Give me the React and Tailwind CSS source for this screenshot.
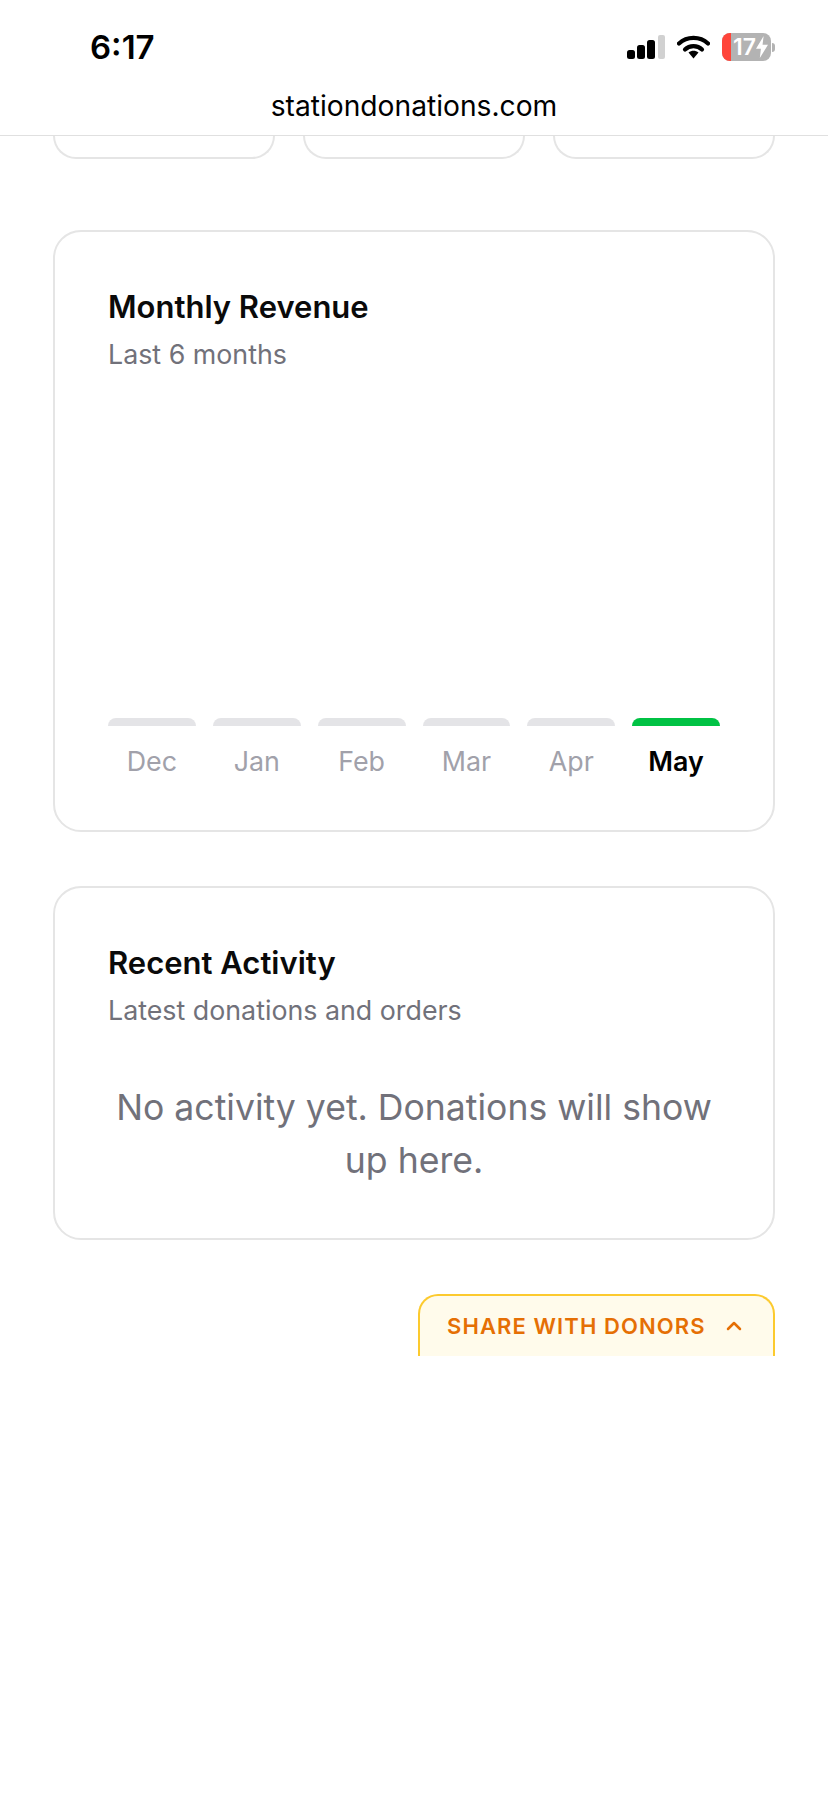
import { ChevronUp } from "lucide-react";

const months = ["Dec", "Jan", "Feb", "Mar", "Apr", "May"];

function StatusIcons() {
  return (
    <div className="flex items-center gap-[12px]">
      {/* signal */}
      <svg width="38" height="24" viewBox="0 0 38 24">
        <rect x="0" y="15" width="8" height="9" rx="2.5" fill="#000" />
        <rect x="10" y="10" width="8" height="14" rx="2.5" fill="#000" />
        <rect x="20" y="5" width="8" height="19" rx="2.5" fill="#000" />
        <rect x="31" y="0" width="7" height="24" rx="2" fill="#d1d1d1" />
      </svg>
      {/* wifi */}
      <svg width="33" height="24" viewBox="0 0 33 24">
        <path d="M2 8.5C10 1 23 1 31 8.5" fill="none" stroke="#000" strokeWidth="4.2" strokeLinecap="round" />
        <path d="M8 14.5C12.5 10 20.5 10 25 14.5" fill="none" stroke="#000" strokeWidth="4.2" strokeLinecap="round" />
        <path d="M11.5 17.5L16.5 23.5L21.5 17.5C18.5 15 14.5 15 11.5 17.5Z" fill="#000" />
      </svg>
      {/* battery */}
      <div className="flex items-center gap-[1px]">
        <div className="relative flex h-[28px] w-[49px] items-center justify-end overflow-hidden rounded-[8px] bg-[#b3b3b3] pr-[3px]">
          <div className="absolute left-0 top-0 h-full w-[9px] bg-[#ff453a]" />
          <span className="relative text-[23px] font-semibold leading-none text-white">17</span>
          <svg className="relative" width="12" height="22" viewBox="0 0 11 20">
            <path d="M7 0L0 11.5H4.5L3.5 20L11 8H6Z" fill="#fff" />
          </svg>
        </div>
        <div className="h-[9px] w-[3px] rounded-r-full bg-[#b3b3b3]" />
      </div>
    </div>
  );
}

export default function App() {
  return (
    <div className="min-h-[1793px] bg-white font-['Inter',sans-serif]">
      <div className="h-[136px] border-b border-[#e0e0e0] pl-[90px] pr-[53px]">
        <div className="flex items-center justify-between pt-[26px]">
          <span className="text-[33px] font-semibold leading-[42px] text-black">6:17</span>
          <StatusIcons />
        </div>
        <p className="-ml-[37px] mt-[20px] text-center text-[28.2px] leading-[36px] text-black">stationdonations.com</p>
      </div>

      <main className="px-[53px]">
        {/* stat cards, scrolled under the bar */}
        <div className="grid grid-cols-3 gap-[28px]">
          <div className="h-[23px] rounded-b-[24px] border-2 border-t-0 border-[#e5e5e5]" />
          <div className="h-[23px] rounded-b-[24px] border-2 border-t-0 border-[#e5e5e5]" />
          <div className="h-[23px] rounded-b-[24px] border-2 border-t-0 border-[#e5e5e5]" />
        </div>

        <section className="mt-[71px] h-[602px] rounded-[28px] border-2 border-[#e5e5e5] px-[53px] pt-[55px]">
          <h2 className="text-[31px] font-semibold leading-[40px] text-[#0a0a0a]">Monthly Revenue</h2>
          <p className="mt-[9px] text-[26.8px] leading-[36px] text-[#71717a]">Last 6 months</p>
          <div className="mt-[346px] grid grid-cols-6 gap-[17px]">
            {months.map((m, i) => (
              <div key={m} className="flex flex-col items-center">
                <div className={`h-[8px] w-full rounded-t-[8px] ${i === 5 ? "bg-[#00c244]" : "bg-[#e4e4e7]"}`} />
                <span className={`mt-[17px] text-[26.8px] leading-[36px] ${i === 5 ? "font-semibold text-black" : "text-[#a1a1aa]"}`}>{m}</span>
              </div>
            ))}
          </div>
        </section>

        <section className="mt-[54px] h-[354px] rounded-[28px] border-2 border-[#e5e5e5] px-[53px] pt-[55px]">
          <h2 className="text-[31px] font-semibold leading-[40px] text-[#0a0a0a]">Recent Activity</h2>
          <p className="mt-[9px] text-[26.8px] leading-[36px] text-[#71717a]">Latest donations and orders</p>
          <p className="mt-[53px] text-center text-[35.6px] leading-[53px] text-[#71717a]">No activity yet. Donations will show up here.</p>
        </section>

        <div className="mt-[54px] flex justify-end">
          <div className="flex h-[62px] w-[357px] items-center gap-[16px] rounded-t-[20px] border-2 border-b-0 border-[#fcca2e] bg-[#fffbeb] pl-[27px]">
            <span className="whitespace-nowrap text-[22px] font-semibold leading-none tracking-[1.1px] text-[#e56f04]">SHARE WITH DONORS</span>
            <ChevronUp size={24} strokeWidth={2.5} className="text-[#e56f04]" />
          </div>
        </div>
      </main>
    </div>
  );
}
